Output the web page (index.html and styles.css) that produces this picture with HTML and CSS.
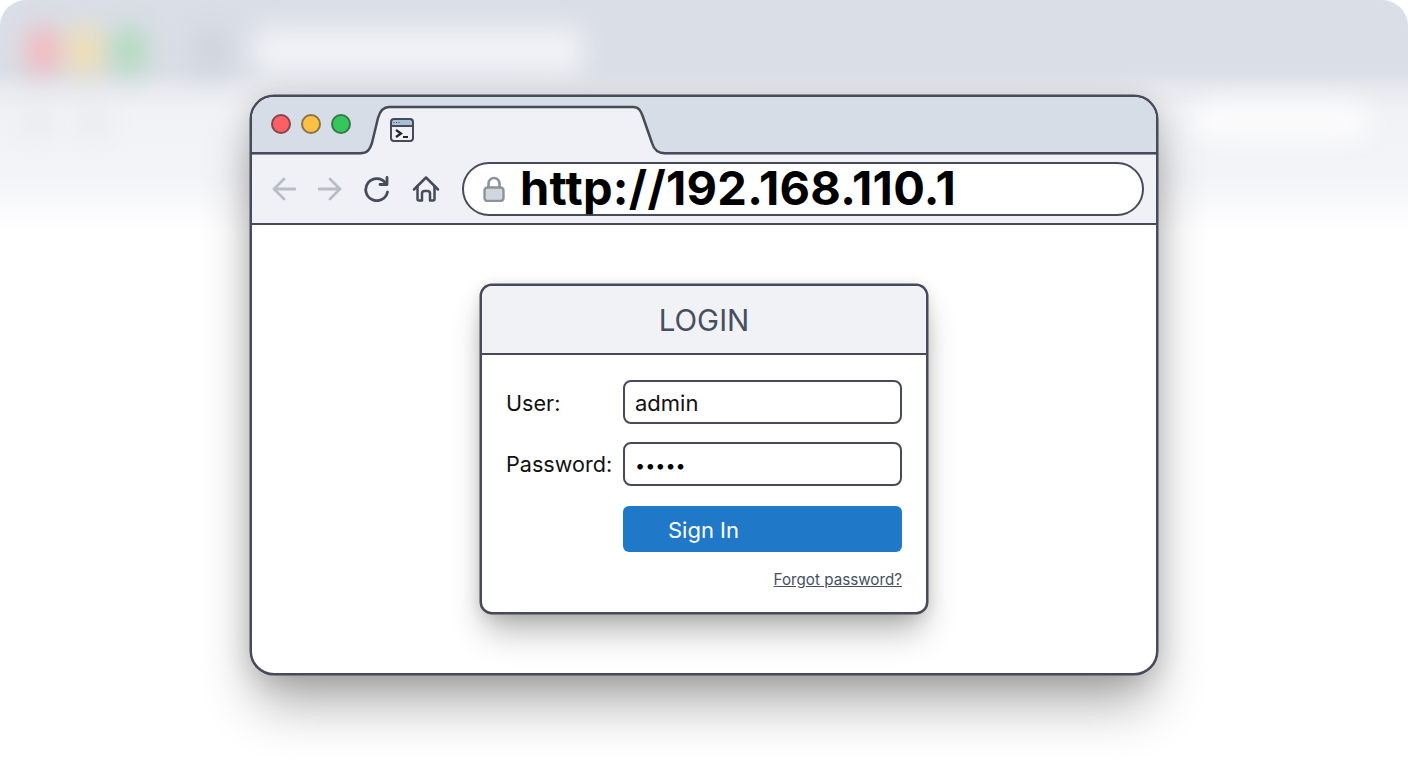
FILE: index.html
```html
<!DOCTYPE html>
<html lang="en">
<head>
  <meta charset="UTF-8">
  <title>Login</title>
  <link rel="stylesheet" href="styles.css">
</head>
<body>

  <!-- the blurred window behind -->
  <div class="backdrop" aria-hidden="true">
    <div class="back-top">
      <span class="back-dot red"></span>
      <span class="back-dot yellow"></span>
      <span class="back-dot green"></span>
      <span class="back-icon"></span>
      <span class="back-tab"></span>
    </div>
    <div class="back-bar">
      <span class="back-btn"></span>
      <span class="back-btn"></span>
      <span class="back-url"></span>
    </div>
  </div>

  <div class="window">
    <div class="titlebar">
      <svg class="tab-shape" width="904" height="58" viewBox="0 0 904 58">
        <path class="tab-fill" d="M108 58C116 56 118 52 120 46L126 21C128 14 131 10 137 10H381C387 10 389 14 391 20L400 46C402 53 406 56 413 58Z"/>
        <path class="tab-line" d="M-2 56.3H108C116 56.3 118 52 120 46L126 21C128 14 131 10 137 10H381C387 10 389 14 391 20L400 46C402 53 406 56.3 413 56.3H906"/>
      </svg>
      <div class="dots">
        <span class="dot red"></span>
        <span class="dot yellow"></span>
        <span class="dot green"></span>
      </div>
      <svg class="tab-icon" width="24" height="24" viewBox="0 0 24 24">
        <rect class="icon-band" x="1" y="1" width="22" height="7"/>
        <rect class="icon-frame" x="1" y="1" width="22" height="22" rx="3"/>
        <path class="icon-frame" d="M1 8H23"/>
        <path class="icon-prompt" d="M6 12L11 15.500L6 19M13 19H18"/>
        <path class="icon-tiny" d="M3.500 4.500H4.500M6 4.500H7M8.500 4.500H9.500"/>
      </svg>
    </div>

    <div class="toolbar">
      <svg class="nav-icon muted" width="24" height="24" viewBox="0 0 24 24">
        <path d="M23 12H2M12 2L2 12L12 22"/>
      </svg>
      <svg class="nav-icon muted" width="24" height="24" viewBox="0 0 24 24">
        <path d="M1 12H22M12 2L22 12L12 22"/>
      </svg>
      <svg class="nav-icon" width="26" height="26" viewBox="0 0 26 26">
        <path d="M21.500 7A11 11 0 1 0 23.500 16"/>
        <path d="M23 1.500V8.500H16"/>
      </svg>
      <svg class="nav-icon home" width="28" height="28" viewBox="0 0 28 28">
        <path d="M2 14.500L14 2.500L26 14.500"/>
        <path d="M5.500 11V24Q5.500 25.500 7 25.500H10V18.500Q10 16 12.500 16H15.500Q18 16 18 18.500V25.500H21Q22.500 25.500 22.500 24V11"/>
      </svg>
      <div class="address">
        <svg class="lock" width="22" height="26" viewBox="0 0 22 26">
          <path class="lock-arc" d="M5.500 12V7.500A5.500 5.500 0 0 1 16.500 7.500V12"/>
          <rect class="lock-body" x="1.500" y="11.500" width="19" height="13.500" rx="3"/>
        </svg>
        <span class="url">http://192.168.110.1</span>
      </div>
    </div>

    <div class="content">
      <div class="card">
        <div class="card-head">LOGIN</div>
        <div class="card-body">
          <div class="label">User:</div>
          <div class="field">admin</div>
          <div class="label second">Password:</div>
          <div class="field secret">•••••</div>
          <a class="sign-in">Sign In</a>
          <a class="forgot">Forgot password?</a>
        </div>
      </div>
    </div>
  </div>

</body>
</html>
```

FILE: styles.css
```css
* { box-sizing: border-box; }
body {
  margin: 0;
  height: 768px;
  overflow: hidden;
  background: #fff;
  font-family: "Inter", "Liberation Sans", sans-serif;
  display: flex;
  justify-content: center;
  padding-top: 95px;
}

/* blurred window */
.backdrop {
  position: absolute;
  top: 0; left: 0; right: 0;
  height: 240px;
  overflow: hidden;
  border-radius: 26px 26px 0 0;
  background: linear-gradient(#dadee6 0, #dadee6 70px, #e8eaef 90px, #f1f2f5 112px, #f3f4f7 175px, #fafafc 208px, #fff 234px);
}
.back-top {
  display: flex;
  align-items: center;
  gap: 8px;
  padding: 24px 0 0 27px;
  height: 78px;
  filter: blur(13px);
}
.back-dot { width: 36px; height: 50px; border-radius: 50%; }
.back-dot.red { width: 32px; background: #f6b4ba; }
.back-dot.yellow { background: #f0deb0; }
.back-dot.green { background: #b0dabc; }
.back-icon { width: 36px; height: 44px; margin-left: 38px; background: #cfd4de; border-radius: 8px; }
.back-tab { width: 330px; height: 50px; margin-left: 17px; background: #eff1f5; border-radius: 10px; }
.back-bar {
  display: flex;
  align-items: center;
  gap: 30px;
  padding: 24px 36px 0 24px;
  filter: blur(12px);
}
.back-btn { width: 26px; height: 28px; background: #e8e9ee; border-radius: 8px; }
.back-url { width: 180px; height: 40px; margin-left: auto; background: #fbfbfc; border-radius: 20px; }

/* front window */
.window {
  position: relative;
  width: 908px;
  height: 580px;
  background: #fff;
  border: 2px solid #474b59;
  border-radius: 24px;
  box-shadow: 0 0 0 .5px #474b59, 0 34px 54px -6px rgba(0,0,0,.32), 0 4px 30px rgba(0,0,0,.16);
}
.titlebar {
  position: relative;
  height: 58px;
  display: flex;
  align-items: flex-start;
  padding: 17px 0 0 19px;
  background: #d6dde6;
  border-radius: 22px 22px 0 0;
}
.tab-shape { position: absolute; left: 0; top: 0; overflow: hidden; }
.tab-fill { fill: #eff1f6; }
.tab-line { fill: none; stroke: #474b59; stroke-width: 2.5; }

.dots { position: relative; display: flex; gap: 10px; }
.dot { width: 20px; height: 20px; border-radius: 50%; border: 2px solid; }
.dot.red { background: #fb6062; border-color: #864452; }
.dot.yellow { background: #fcc044; border-color: #8a7446; }
.dot.green { background: #34c759; border-color: #38774e; }

.tab-icon { position: relative; margin: 4px 0 0 39px; }
.icon-band { fill: #a9bfd8; }
.icon-frame { fill: none; stroke: #474b59; stroke-width: 2; }
.icon-prompt { fill: none; stroke: #22252e; stroke-width: 2.2; }
.icon-tiny { fill: none; stroke: #474b59; stroke-width: 1.2; }

.toolbar {
  height: 70px;
  display: flex;
  align-items: center;
  gap: 22px;
  padding: 0 12px 0 20px;
  background: #eff1f6;
  border-bottom: 2px solid #474b59;
}
.nav-icon { flex: none; fill: none; stroke: #474b59; stroke-width: 2.8; stroke-linecap: round; stroke-linejoin: round; }
.nav-icon.muted { stroke: #b9bdc6; }
.nav-icon.home { stroke-width: 2.5; }
.address {
  flex: 1;
  height: 54px;
  display: flex;
  align-items: center;
  padding-left: 19px;
  background: #fff;
  border: 2px solid #474b59;
  border-radius: 27px;
}
.lock { flex: none; }
.lock-arc { fill: none; stroke: #8e929c; stroke-width: 2.6; }
.lock-body { fill: #d2d6de; stroke: #8e929c; stroke-width: 2.4; }
.url {
  margin: 0 0 3px 15px;
  font-size: 47px;
  font-weight: 700;
  letter-spacing: .3px;
  color: #000;
  line-height: 1;
}

/* login card */
.content { padding-top: 59px; }
.card {
  width: 448px;
  height: 330px;
  margin: 0 auto;
  background: #fff;
  border: 2px solid #474b59;
  border-radius: 12px;
  box-shadow: 0 0 0 .5px #474b59, 0 22px 34px -6px rgba(0,0,0,.3), 0 2px 16px rgba(0,0,0,.13);
}
.card-head {
  height: 69px;
  display: flex;
  align-items: center;
  justify-content: center;
  background: #f0f2f6;
  border-bottom: 2px solid #474b59;
  border-radius: 10px 10px 0 0;
  font-size: 29.500px;
  color: #474f5f;
}
.card-body {
  display: grid;
  grid-template-columns: 117px 279px;
  row-gap: 18px;
  align-items: center;
  padding: 25px 24px 0;
}
.label { padding-top: 2px; font-size: 21.600px; color: #111; }
.label.second { padding-top: 0; }
.field {
  height: 44px;
  display: flex;
  align-items: center;
  padding: 2px 0 0 10px;
  border: 2px solid #474b59;
  border-radius: 8px;
  font-size: 22px;
  color: #111;
}
.field.secret { font-size: 18px; color: #000; }
.sign-in {
  grid-column: 2;
  height: 46px;
  margin-top: 2px;
  display: flex;
  align-items: center;
  padding: 2px 0 0 45px;
  background: #1f78c8;
  border-radius: 6px;
  font-size: 22px;
  color: #fff;
}
.forgot {
  grid-column: 2;
  justify-self: end;
  font-size: 15.200px;
  color: #474f5f;
  text-decoration: underline;
}
```
